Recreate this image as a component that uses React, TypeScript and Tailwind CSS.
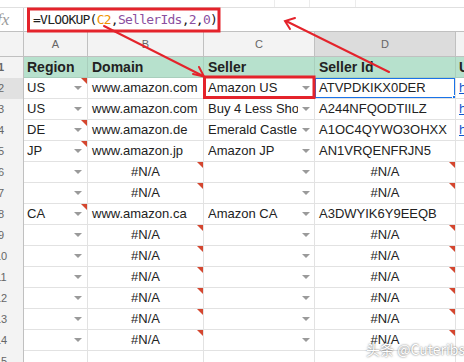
import React from 'react';

type Row = {
  a?: string;
  b?: string;
  c?: string;
  d?: string;
  e?: string;
  aNote?: boolean;
  na?: boolean;
  blank?: boolean;
};

const rows: Row[] = [
  { a: 'US', b: 'www.amazon.com', c: 'Amazon US', d: 'ATVPDKIKX0DER', e: 'h', aNote: true },
  { a: 'US', b: 'www.amazon.com', c: 'Buy 4 Less Shoes', d: 'A244NFQODTIILZ', e: 'h' },
  { a: 'DE', b: 'www.amazon.de', c: 'Emerald Castle', d: 'A1OC4QYWO3OHXX', e: 'h', aNote: true },
  { a: 'JP', b: 'www.amazon.jp', c: 'Amazon JP', d: 'AN1VRQENFRJN5', aNote: true },
  { na: true },
  { na: true },
  { a: 'CA', b: 'www.amazon.ca', c: 'Amazon CA', d: 'A3DWYIK6Y9EEQB', aNote: true },
  { na: true },
  { na: true },
  { na: true },
  { na: true },
  { na: true },
  { na: true },
  { blank: true },
];

const font = { fontFamily: '"Liberation Sans", Arial, sans-serif' };

function Caret() {
  return (
    <div className="w-0 h-0 shrink-0 border-l-[4px] border-r-[4px] border-t-[4px] border-l-transparent border-r-transparent border-t-[#9a9a9a]" />
  );
}

function Note() {
  return (
    <div className="absolute top-0 right-0 w-0 h-0 border-l-[6px] border-b-[6px] border-l-transparent border-b-transparent border-t-0 border-r-[6px] border-r-[#d4462f]" />
  );
}

function RowNum({ n, active }: { n: number; active?: boolean }) {
  return (
    <div
      className={`w-[24px] shrink-0 overflow-hidden border-r border-[#c0c0c0] ${active ? 'bg-[#e1e1e1]' : 'bg-[#f3f3f3]'}`}
    >
      <div className="w-[46px] -ml-[22px] h-full flex items-center justify-center text-[11px] text-[#666]">{n}</div>
    </div>
  );
}

function DataRow({ r, n }: { r: Row; n: number }) {
  const first = n === 2;
  return (
    <div className="flex h-[21px] text-[13px] text-[#222]">
      <RowNum n={n} active={first} />
      <div className="relative w-[64px] shrink-0 border-r border-b border-[#e2e2e2] flex items-center pl-[3px] pr-[5px]">
        <span className="flex-1 overflow-hidden whitespace-nowrap">{r.a}</span>
        {!r.blank && <Caret />}
        {r.aNote && <Note />}
      </div>
      <div className="relative w-[116px] shrink-0 border-r border-b border-[#e2e2e2] flex items-center px-[4px] overflow-hidden whitespace-nowrap">
        {r.na ? <span className="w-full text-center">#N/A</span> : r.b}
        {r.na && <Note />}
      </div>
      <div className="relative w-[111px] shrink-0 border-r border-b border-[#e2e2e2] flex items-center pl-[4px] pr-[4px]">
        <span className="flex-1 overflow-hidden whitespace-nowrap">{r.c}</span>
        {!r.blank && <div className="pl-[4px]"><Caret /></div>}
      </div>
      <div className="relative w-[141px] shrink-0 border-r border-b border-[#e2e2e2] flex items-center px-[4px] overflow-hidden whitespace-nowrap">
        {r.na ? <span className="w-full text-center">#N/A</span> : r.d}
        {r.na && <Note />}
        {first && (
          <>
            <div className="absolute -left-px -top-px -right-px -bottom-px border-2 border-[#1a73e8]" />
            <div className="absolute -right-[3px] -bottom-[3px] w-[6px] h-[6px] bg-[#1a73e8] border border-white" />
          </>
        )}
      </div>
      <div className="flex-1 border-b border-[#e2e2e2] flex items-center pl-[3px] overflow-hidden">
        {r.e && <span className="text-[#1155cc] underline">{r.e}</span>}
      </div>
    </div>
  );
}

export default function App() {
  return (
    <div className="relative w-[464px] h-[362px] overflow-hidden bg-white" style={font}>
      {/* toolbar edge */}
      <div className="flex h-[8px] border-b border-[#e0e0e0]">
        <div className="w-[274px]" />
        <div className="w-[35px] border-l border-[#ececec]" />
        <div className="w-[46px] border-l border-[#ececec]" />
        <div className="flex-1 border-l border-[#ececec]" />
      </div>

      {/* formula bar */}
      <div className="flex h-[24px] border-b border-[#c0c0c0] items-center">
        <div className="w-[24px] shrink-0 h-full border-r border-[#d0d0d0] overflow-hidden flex items-center">
          <span
            className="-ml-[3px] text-[17px] italic text-[#9a9a9a]"
            style={{ fontFamily: '"Liberation Serif", serif' }}
          >
            fx
          </span>
        </div>
        <div
          className="pl-[9px] pt-px text-[13px] tracking-[-0.75px] text-[#222] whitespace-nowrap"
          style={{ fontFamily: '"DejaVu Sans Mono", monospace' }}
        >
          =VLOOKUP(<span className="text-[#f09300]">C2</span>,<span className="text-[#8b4f9f]">SellerIds</span>,
          <span className="text-[#8b4f9f]">2</span>,<span className="text-[#8b4f9f]">0</span>)
        </div>
      </div>

      {/* column letters */}
      <div className="flex h-[25px] border-b border-[#c0c0c0] text-[11px] text-[#666]">
        <div className="w-[24px] shrink-0 border-r border-[#c0c0c0] bg-[#f3f3f3]" />
        <div className="w-[64px] shrink-0 border-r border-[#c0c0c0] bg-[#f3f3f3] flex items-center justify-center">A</div>
        <div className="w-[116px] shrink-0 border-r border-[#c0c0c0] bg-[#f3f3f3] flex items-center justify-center">B</div>
        <div className="w-[111px] shrink-0 border-r border-[#c0c0c0] bg-[#f3f3f3] flex items-center justify-center">C</div>
        <div className="w-[141px] shrink-0 border-r border-[#c0c0c0] bg-[#dcdcdc] flex items-center justify-center">D</div>
        <div className="flex-1 bg-[#f3f3f3]" />
      </div>

      {/* header row */}
      <div className="flex h-[21px] text-[14px] font-bold text-[#222]">
        <RowNum n={1} />
        <div className="w-[64px] shrink-0 border-r border-b border-[#a9cfbd] bg-[#b7e1cd] flex items-center pl-[3px]">Region</div>
        <div className="w-[116px] shrink-0 border-r border-b border-[#a9cfbd] bg-[#b7e1cd] flex items-center pl-[4px]">Domain</div>
        <div className="w-[111px] shrink-0 border-r border-b border-[#a9cfbd] bg-[#b7e1cd] flex items-center pl-[4px]">Seller</div>
        <div className="w-[141px] shrink-0 border-r border-b border-[#a9cfbd] bg-[#b7e1cd] flex items-center pl-[4px]">Seller Id</div>
        <div className="flex-1 border-b border-[#a9cfbd] bg-[#b7e1cd] flex items-center pl-[3px] overflow-hidden">Url</div>
      </div>

      {rows.map((r, i) => (
        <DataRow key={i} r={r} n={i + 2} />
      ))}

      {/* annotations */}
      <svg className="absolute inset-0 pointer-events-none" width="464" height="362">
        <g stroke="#e4232b" fill="none" strokeWidth="3">
          <rect x="28.5" y="9" width="190.5" height="22" />
          <rect x="204.5" y="77" width="109.5" height="20.5" />
        </g>
        <g stroke="#e4232b" fill="none" strokeWidth="2" strokeLinecap="round">
          <line x1="104" y1="26" x2="203" y2="76" />
          <polyline points="193,74 204,76.5 199,67" />
          <line x1="389" y1="72" x2="286" y2="21" />
          <polyline points="295,18 285,21 290,29" />
        </g>
      </svg>

      <div
        className="absolute left-[366px] top-[339px] text-[14px] text-white whitespace-nowrap [text-shadow:0_0_2px_rgba(0,0,0,0.7)]"
        style={{ fontFamily: '"Noto Sans CJK SC", "Liberation Sans", sans-serif' }}
      >
        头条 @Cuteribs
      </div>
    </div>
  );
}
